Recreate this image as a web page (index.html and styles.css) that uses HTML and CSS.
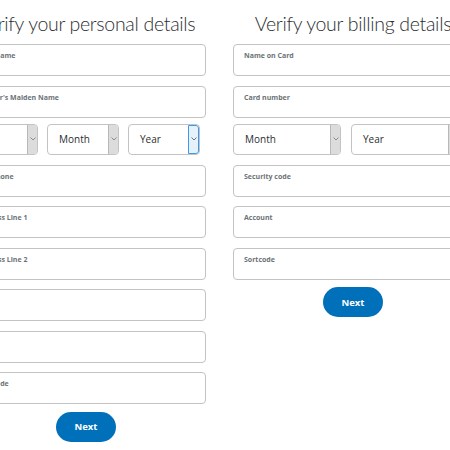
FILE: index.html
```html
<!DOCTYPE html>
<html>
<head>
<meta charset="utf-8">
<link rel="stylesheet" href="styles.css">
</head>
<body>
<div class="page">
  <section class="col">
    <h1 class="title">Verify your personal details</h1>
    <div class="field"><span class="label">First Name</span></div>
    <div class="field"><span class="label">Mother's Maiden Name</span></div>
    <div class="selects three">
      <div class="select"><span class="val">Day</span><span class="arrow"><svg viewBox="0 0 6 4" width="6" height="4"><polyline points="0.5,0.5 3,3 5.5,0.5" fill="none" stroke="#777" stroke-width="0.8"/></svg></span></div>
      <div class="select"><span class="val">Month</span><span class="arrow"><svg viewBox="0 0 6 4" width="6" height="4"><polyline points="0.5,0.5 3,3 5.5,0.5" fill="none" stroke="#777" stroke-width="0.8"/></svg></span></div>
      <div class="select"><span class="val">Year</span><span class="arrow hover"><svg viewBox="0 0 6 4" width="6" height="4"><polyline points="0.5,0.5 3,3 5.5,0.5" fill="none" stroke="#555" stroke-width="0.8"/></svg></span></div>
    </div>
    <div class="field"><span class="label">Telephone</span></div>
    <div class="field"><span class="label">Address Line 1</span></div>
    <div class="field"><span class="label">Address Line 2</span></div>
    <div class="field"><span class="label"></span></div>
    <div class="field"><span class="label"></span></div>
    <div class="field"><span class="label">Postcode</span></div>
    <button class="btn">Next</button>
  </section>
  <section class="col">
    <h1 class="title">Verify your billing details</h1>
    <div class="field"><span class="label">Name on Card</span></div>
    <div class="field"><span class="label">Card number</span></div>
    <div class="selects two">
      <div class="select"><span class="val">Month</span><span class="arrow"><svg viewBox="0 0 6 4" width="6" height="4"><polyline points="0.5,0.5 3,3 5.5,0.5" fill="none" stroke="#777" stroke-width="0.8"/></svg></span></div>
      <div class="select"><span class="val">Year</span><span class="arrow"><svg viewBox="0 0 6 4" width="6" height="4"><polyline points="0.5,0.5 3,3 5.5,0.5" fill="none" stroke="#777" stroke-width="0.8"/></svg></span></div>
    </div>
    <div class="field"><span class="label">Security code</span></div>
    <div class="field"><span class="label">Account</span></div>
    <div class="field"><span class="label">Sortcode</span></div>
    <button class="btn">Next</button>
  </section>
</div>
</body>
</html>
```
FILE: styles.css
```css
html, body {
  margin: 0;
  padding: 0;
  background: #fff;
  overflow: hidden;
}
.page {
  display: flex;
  gap: 27px;
  margin-left: -34px;
  width: 600px;
  font-family: "Open Sans", sans-serif;
}
.col {
  width: 240px;
  flex: none;
  display: flex;
  flex-direction: column;
}
.title {
  margin: 10px -40px 7px;
  height: 27px;
  font-family: Lato, sans-serif;
  font-weight: 300;
  font-size: 19.5px;
  letter-spacing: -0.3px;
  line-height: 27px;
  color: #2c2e2f;
  text-align: center;
  white-space: nowrap;
}
.field {
  box-sizing: border-box;
  height: 32px;
  margin-bottom: 9.5px;
  border: 1px solid #c3c3c3;
  border-radius: 4px;
  padding: 6px 10px 0;
}
.label {
  display: block;
  font-size: 7px;
  font-weight: 700;
  color: #6c7378;
  line-height: 10px;
}
.selects {
  display: flex;
  margin: -3.5px 0 10px;
  height: 31px;
}
.selects.three { gap: 9px; }
.selects.three .select { width: 72px; }
.selects.two { gap: 10px; }
.selects.two .select { width: 108px; }
.select {
  box-sizing: border-box;
  flex: none;
  display: flex;
  align-items: stretch;
  border: 1px solid #c3c3c3;
  border-radius: 4px;
  overflow: hidden;
}
.val {
  flex: 1;
  padding-left: 11px;
  font-size: 10px;
  color: #2c2e2f;
  display: flex;
  align-items: center;
}
.arrow {
  width: 9px;
  background: #dcdcdc;
  border-left: 1px solid #b8b8b8;
  display: flex;
  align-items: center;
  justify-content: center;
}
.arrow.hover {
  background: #e5f1fb;
  border: 1px solid #3c9ae8;
  border-radius: 0 3px 3px 0;
}
.btn {
  align-self: center;
  margin-top: -2px;
  width: 60px;
  height: 30px;
  border: none;
  border-radius: 15px;
  background: #0070ba;
  color: #fff;
  font-family: "Open Sans", sans-serif;
  font-weight: 700;
  font-size: 9.5px;
  padding: 0;
}
```
